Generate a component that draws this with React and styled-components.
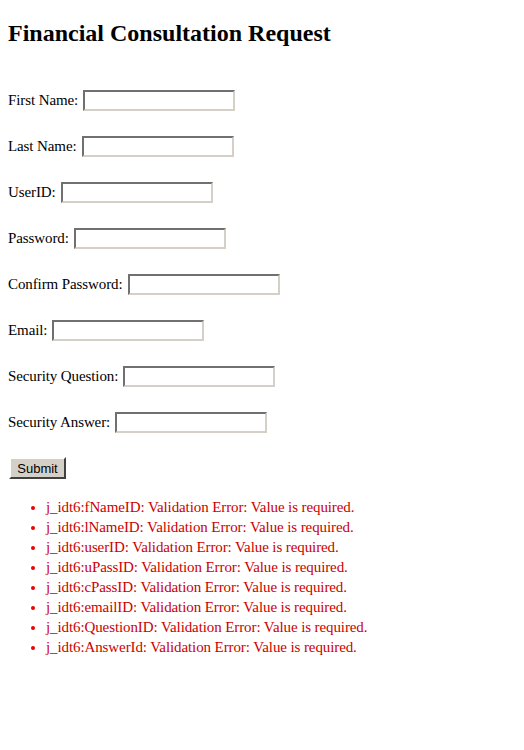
import React from "react";
import styled, { createGlobalStyle } from "styled-components";

const GlobalStyle = createGlobalStyle`
  body {
    margin: 8px;
    background: #fff;
    font-family: "Liberation Serif", "Times New Roman", serif;
    font-size: 15px;
    color: #000;
  }
`;

const Page = styled.div`
  display: flex;
  flex-direction: column;
`;

const Title = styled.h1`
  margin: 12px 0 0;
  font-size: 24px;
  font-weight: bold;
  line-height: 27px;
`;

const Form = styled.form`
  display: flex;
  flex-direction: column;
  gap: 24px;
  margin-top: 42px;
`;

const Row = styled.div`
  display: flex;
  align-items: center;
  height: 22px;
  gap: 5px;
`;

const Label = styled.label`
  white-space: nowrap;
  letter-spacing: -0.1px;
`;

const TextBox = styled.input`
  box-sizing: border-box;
  width: 152px;
  height: 21px;
  margin: 0;
  padding: 1px 2px;
  background: #fff;
  border: 2px solid;
  border-color: #707070 #d4d0c8 #d4d0c8 #707070;
  outline: none;
`;

const SubmitButton = styled.button`
  box-sizing: border-box;
  width: 57px;
  height: 22px;
  margin: 0 0 0 1px;
  padding: 0;
  background: #d4d0c8;
  border: 2px solid;
  border-color: #fff #404040 #404040 #fff;
  font-family: "Liberation Sans", Arial, sans-serif;
  font-size: 13px;
  color: #000;
`;

const ErrorList = styled.ul`
  margin: 18px 0 0;
  padding-left: 38px;
  color: #c00;
  list-style: disc;
`;

const ErrorItem = styled.li`
  height: 20px;
  line-height: 20px;
  letter-spacing: -0.1px;
  &::marker {
    color: #e00;
  }
`;

const fields = [
  "First Name:",
  "Last Name:",
  "UserID:",
  "Password:",
  "Confirm Password:",
  "Email:",
  "Security Question:",
  "Security Answer:",
];

const errors = [
  "fNameID",
  "lNameID",
  "userID",
  "uPassID",
  "cPassID",
  "emailID",
  "QuestionID",
  "AnswerId",
];

export default function App() {
  return (
    <Page>
      <GlobalStyle />
      <Title>Financial Consultation Request</Title>
      <Form onSubmit={(e) => e.preventDefault()}>
        {fields.map((f) => (
          <Row key={f}>
            <Label>{f}</Label>
            <TextBox type="text" />
          </Row>
        ))}
        <Row>
          <SubmitButton type="submit">Submit</SubmitButton>
        </Row>
      </Form>
      <ErrorList>
        {errors.map((id) => (
          <ErrorItem key={id}>j_idt6:{id}: Validation Error: Value is required.</ErrorItem>
        ))}
      </ErrorList>
    </Page>
  );
}
